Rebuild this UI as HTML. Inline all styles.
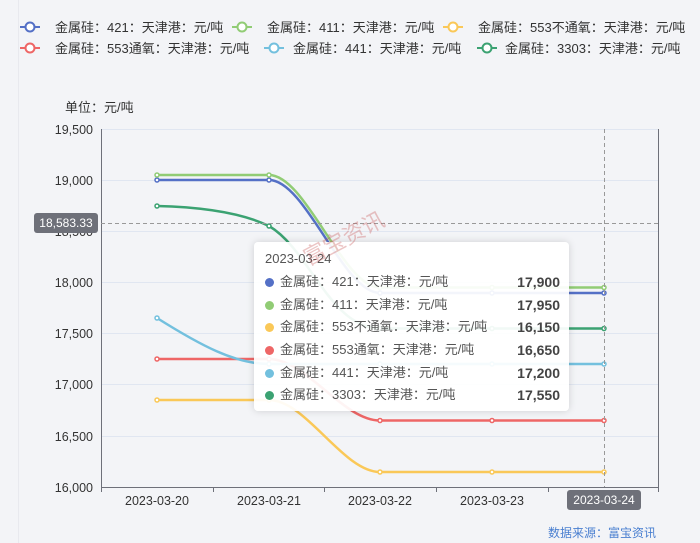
<!DOCTYPE html><html><head><meta charset="utf-8"><style>
body{margin:0;width:700px;height:543px;background:#f3f4f7;font-family:"Liberation Sans","Noto Sans CJK SC",sans-serif;overflow:hidden;position:relative}
svg{position:absolute;left:0;top:0}
.tt{position:absolute;left:254px;top:242px;width:315px;height:169px;background:rgba(255,255,255,.93);border-radius:4px;box-shadow:0 0 8px rgba(0,0,0,.15);font-size:13px;color:#555}
.tt .d{position:absolute;left:11px;top:9px;font-size:13px;color:#555}
.row{position:absolute;left:11px;height:20px;width:295px;line-height:20px}
.row i{display:inline-block;width:9px;height:9px;border-radius:50%;margin-right:6px;vertical-align:-1px}
.row b{position:absolute;right:0;color:#444;font-size:14px}
</style></head><body>
<svg width="700" height="543" font-family="Liberation Sans,Noto Sans CJK SC,sans-serif">
<line x1="18.5" y1="0" x2="18.5" y2="543" stroke="#e8e9ee"/>
<g font-size="13" fill="#333">
<g stroke-width="2" fill="#fff">
<line x1="20" y1="27" x2="40" y2="27" stroke="#5470c6"/><circle cx="30" cy="27" r="4.5" stroke="#5470c6"/>
<line x1="232" y1="27" x2="252" y2="27" stroke="#91cc75"/><circle cx="242" cy="27" r="4.5" stroke="#91cc75"/>
<line x1="443" y1="27" x2="463" y2="27" stroke="#fac858"/><circle cx="453" cy="27" r="4.5" stroke="#fac858"/>
<line x1="20" y1="48" x2="40" y2="48" stroke="#ee6666"/><circle cx="30" cy="48" r="4.5" stroke="#ee6666"/>
<line x1="264" y1="48" x2="284" y2="48" stroke="#73c0de"/><circle cx="274" cy="48" r="4.5" stroke="#73c0de"/>
<line x1="477" y1="48" x2="497" y2="48" stroke="#3ba272"/><circle cx="487" cy="48" r="4.5" stroke="#3ba272"/>
</g>
<text x="55" y="32">金属硅：421：天津港：元/吨</text>
<text x="267" y="32">金属硅：411：天津港：元/吨</text>
<text x="478" y="32">金属硅：553不通氧：天津港：元/吨</text>
<text x="55" y="53">金属硅：553通氧：天津港：元/吨</text>
<text x="293" y="53">金属硅：441：天津港：元/吨</text>
<text x="505" y="53">金属硅：3303：天津港：元/吨</text>
<text x="65" y="112">单位：元/吨</text>
</g>
<g stroke="#e0e6f1">
<line x1="101" y1="129.5" x2="659" y2="129.5"/><line x1="101" y1="180.5" x2="659" y2="180.5"/><line x1="101" y1="231.5" x2="659" y2="231.5"/><line x1="101" y1="282.5" x2="659" y2="282.5"/><line x1="101" y1="333.5" x2="659" y2="333.5"/><line x1="101" y1="384.5" x2="659" y2="384.5"/><line x1="101" y1="436.5" x2="659" y2="436.5"/>
</g>
<g stroke="#6e7079"><line x1="101.5" y1="129" x2="101.5" y2="492"/><line x1="101" y1="487.5" x2="659" y2="487.5"/><line x1="658.5" y1="129" x2="658.5" y2="492"/>
<line x1="213.5" y1="487" x2="213.5" y2="492"/><line x1="324.5" y1="487" x2="324.5" y2="492"/><line x1="436.5" y1="487" x2="436.5" y2="492"/><line x1="548.5" y1="487" x2="548.5" y2="492"/></g>
<g font-size="12.5" fill="#333" text-anchor="end">
<text x="93" y="134">19,500</text><text x="93" y="185">19,000</text><text x="93" y="236">18,500</text><text x="93" y="287">18,000</text><text x="93" y="338">17,500</text><text x="93" y="389">17,000</text><text x="93" y="441">16,500</text><text x="93" y="492">16,000</text>
</g>
<g font-size="12.5" fill="#333" text-anchor="middle">
<text x="157" y="505">2023-03-20</text><text x="269" y="505">2023-03-21</text><text x="380" y="505">2023-03-22</text><text x="492" y="505">2023-03-23</text>
</g>
<g fill="none" stroke-width="2.5">
<path d="M157 180 L269 180 C306 180 343 293 380 293 L604 293" stroke="#5470c6"/>
<path d="M157 175 L269 175 C306 175 343 287.5 380 287.5 L604 287.5" stroke="#91cc75"/>
<path d="M157 400 L269 400 C306 400 343 472 380 472 L604 472" stroke="#fac858"/>
<path d="M157 359 L269 359 C306 359 343 420.5 380 420.5 L604 420.5" stroke="#ee6666"/>
<path d="M157 318 C200 345 235 364 269 364 L604 364" stroke="#73c0de"/>
<path d="M157 206 C200 207 240 212 269 226 C310 250 330 328 380 328.5 L604 328.5" stroke="#3ba272"/>
</g>
<g fill="#fff" stroke-width="1.5">
<g stroke="#5470c6"><circle cx="157" cy="180" r="2"/><circle cx="269" cy="180" r="2"/><circle cx="380" cy="293" r="2"/><circle cx="492" cy="293" r="2"/><circle cx="604" cy="293" r="2"/></g>
<g stroke="#91cc75"><circle cx="157" cy="175" r="2"/><circle cx="269" cy="175" r="2"/><circle cx="380" cy="287.5" r="2"/><circle cx="492" cy="287.5" r="2"/><circle cx="604" cy="287.5" r="2"/></g>
<g stroke="#fac858"><circle cx="157" cy="400" r="2"/><circle cx="269" cy="400" r="2"/><circle cx="380" cy="472" r="2"/><circle cx="492" cy="472" r="2"/><circle cx="604" cy="472" r="2"/></g>
<g stroke="#ee6666"><circle cx="157" cy="359" r="2"/><circle cx="269" cy="359" r="2"/><circle cx="380" cy="420.5" r="2"/><circle cx="492" cy="420.5" r="2"/><circle cx="604" cy="420.5" r="2"/></g>
<g stroke="#73c0de"><circle cx="157" cy="318" r="2"/><circle cx="269" cy="364" r="2"/><circle cx="380" cy="364" r="2"/><circle cx="492" cy="364" r="2"/><circle cx="604" cy="364" r="2"/></g>
<g stroke="#3ba272"><circle cx="157" cy="206" r="2"/><circle cx="269" cy="226" r="2"/><circle cx="380" cy="328.5" r="2"/><circle cx="492" cy="328.5" r="2"/><circle cx="604" cy="328.5" r="2"/></g>
</g>
<g stroke="#999" stroke-dasharray="4 3"><line x1="101" y1="223.5" x2="659" y2="223.5"/><line x1="604.5" y1="129" x2="604.5" y2="487"/></g>
<rect x="34" y="213" width="64" height="20" rx="3" fill="#6e7079"/>
<text x="66" y="227" font-size="12" fill="#fff" text-anchor="middle">18,583.33</text>
<rect x="567" y="490" width="74" height="20" rx="3" fill="#6e7079"/>
<text x="604" y="504" font-size="12" fill="#fff" text-anchor="middle">2023-03-24</text>
<text x="656" y="537" font-size="12" fill="#4a7fd0" text-anchor="end">数据来源：富宝资讯</text>
</svg>
<div class="tt"><div class="d">2023-03-24</div>
<div class="row" style="top:30px"><i style="background:#5470c6"></i>金属硅：421：天津港：元/吨<b>17,900</b></div>
<div class="row" style="top:53px"><i style="background:#91cc75"></i>金属硅：411：天津港：元/吨<b>17,950</b></div>
<div class="row" style="top:75px"><i style="background:#fac858"></i>金属硅：553不通氧：天津港：元/吨<b>16,150</b></div>
<div class="row" style="top:98px"><i style="background:#ee6666"></i>金属硅：553通氧：天津港：元/吨<b>16,650</b></div>
<div class="row" style="top:121px"><i style="background:#73c0de"></i>金属硅：441：天津港：元/吨<b>17,200</b></div>
<div class="row" style="top:143px"><i style="background:#3ba272"></i>金属硅：3303：天津港：元/吨<b>17,550</b></div>
<div style="position:absolute;left:58px;top:-2px;font-size:22px;color:rgba(200,90,90,.35);transform:rotate(-28deg);transform-origin:left bottom">富宝资讯</div>
</div>
</body></html>
